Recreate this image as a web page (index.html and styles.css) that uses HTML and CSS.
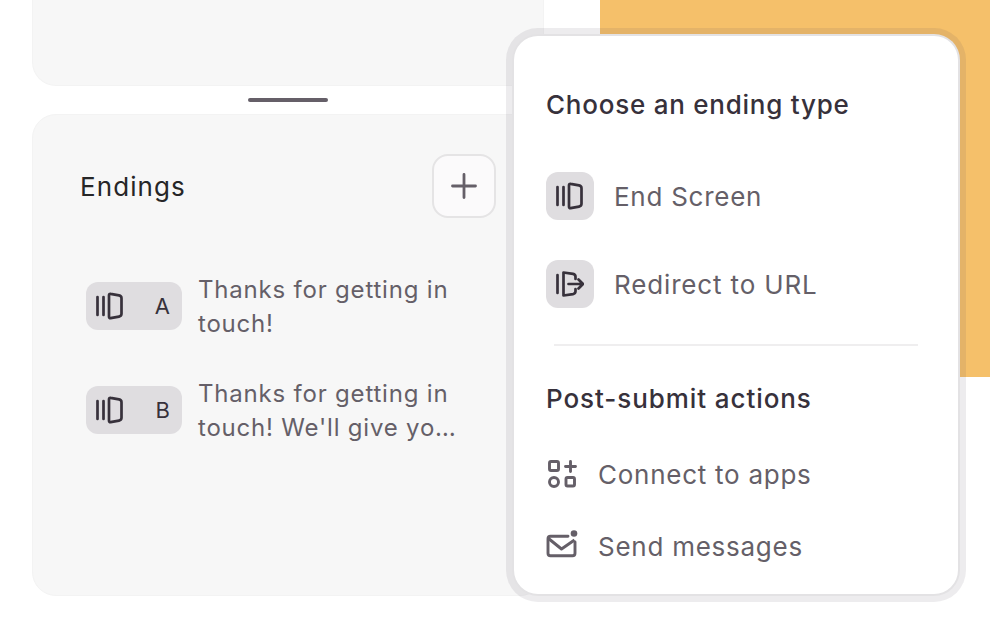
FILE: index.html
```html
<!DOCTYPE html>
<html lang="en">
<head>
<meta charset="utf-8">
<title>Endings</title>
<link rel="stylesheet" href="styles.css">
</head>
<body>
<svg class="defs" width="0" height="0" aria-hidden="true">
  <symbol id="end" viewBox="0 0 28 28">
    <path d="M1.500 5v18M7.500 5v18M13 3.200c0-.9.7-1.500 1.600-1.300l8.400 1.500c1.500.3 2.500 1.300 2.500 2.800v15.600c0 1.500-1 2.500-2.500 2.800l-8.400 1.500c-.9.2-1.600-.4-1.600-1.300z" fill="none" stroke="currentColor" stroke-width="2.700" stroke-linecap="round" stroke-linejoin="round"/>
  </symbol>
</svg>
<main class="page">
  <section class="left">
    <div class="card card-top"></div>
    <div class="handle-row"><span class="handle"></span></div>
    <div class="card card-endings">
      <header class="endings-head">
        <h2 class="endings-title">Endings</h2>
        <button class="add-btn" aria-label="Add ending">
          <svg width="28" height="28" viewBox="0 0 28 28"><path d="M14 2.500v23M2.500 14h23" fill="none" stroke="currentColor" stroke-width="2.800" stroke-linecap="round"/></svg>
        </button>
      </header>
      <ul class="ending-list">
        <li class="ending">
          <span class="badge"><svg class="i-end" width="28" height="28"><use href="#end"/></svg><span class="letter">A</span></span>
          <span class="ending-text">Thanks for getting in touch!</span>
        </li>
        <li class="ending">
          <span class="badge"><svg class="i-end" width="28" height="28"><use href="#end"/></svg><span class="letter">B</span></span>
          <span class="ending-text">Thanks for getting in touch! We'll give yo…</span>
        </li>
      </ul>
    </div>
  </section>
  <aside class="accent"></aside>
  <div class="popup">
    <h3 class="popup-title">Choose an ending type</h3>
    <div class="type-row">
      <span class="type-icon"><svg width="28" height="28"><use href="#end"/></svg></span>
      <span class="type-label">End Screen</span>
    </div>
    <div class="type-row">
      <span class="type-icon">
        <svg width="28" height="28" viewBox="0 0 28 28"><path d="M1.500 5v18M7.500 2.500v23M7.500 2.500l9.500 1.400c1.500.3 2.500 1.300 2.500 2.800v2.300M7.500 25.500l9.500-1.400c1.500-.3 2.500-1.300 2.500-2.800v-2.300M12.500 14h14.500M22.500 9.500 27 14l-4.500 4.500" fill="none" stroke="currentColor" stroke-width="2.700" stroke-linecap="round" stroke-linejoin="round"/></svg>
      </span>
      <span class="type-label type-label-wide">Redirect to URL</span>
    </div>
    <hr class="divider">
    <h3 class="popup-title popup-title-2">Post-submit actions</h3>
    <div class="action-row">
      <svg class="action-icon" width="32" height="32" viewBox="0 0 32 32"><g fill="none" stroke="currentColor" stroke-width="2.900" stroke-linecap="round" stroke-linejoin="round"><rect x="3.500" y="3.500" width="9" height="9" rx="1.500"/><path d="M24.500 3.500v10M19.500 8.500h10"/><circle cx="8" cy="24" r="4.500"/><rect x="20" y="19.500" width="8.500" height="8.500" rx="1.500"/></g></svg>
      <span class="type-label">Connect to apps</span>
    </div>
    <div class="action-row action-row-2">
      <svg class="action-icon" width="32" height="32" viewBox="0 0 32 32"><path d="M22 6.300H4.500A2.500 2.500 0 0 0 2 8.800v14.400a2.500 2.500 0 0 0 2.500 2.500h22a2.500 2.500 0 0 0 2.500-2.500V12" fill="none" stroke="currentColor" stroke-width="2.900" stroke-linecap="round"/><path d="M2.500 8.500 15.500 19 28.500 10" fill="none" stroke="currentColor" stroke-width="2.900" stroke-linejoin="round"/><circle cx="28" cy="3.500" r="3.300" fill="currentColor"/></svg>
      <span class="type-label">Send messages</span>
    </div>
  </div>
</main>
</body>
</html>
```

FILE: styles.css
```css
* { box-sizing: border-box; }
html, body { margin: 0; padding: 0; height: 100%; background: #fff; overflow: hidden; }
body { font-family: Inter, "Liberation Sans", sans-serif; }
.defs { position: absolute; }
.page { position: relative; display: flex; width: 990px; height: 628px; }

.left { width: 512px; margin-left: 32px; display: flex; flex-direction: column; }
.card { background: #f7f7f7; border: 1px solid #f3f3f3; }
.card-top { height: 86px; border-top: 0; border-radius: 0 0 24px 24px; }
.handle-row { height: 28px; display: flex; align-items: center; justify-content: center; }
.handle { width: 80px; height: 4px; border-radius: 2px; background: #655f68; }
.card-endings { height: 482px; border-radius: 24px; padding: 39px 47px 0 47px; }

.endings-head { display: flex; align-items: center; justify-content: space-between; width: 416px; height: 64px; }
.endings-title { margin: 0; font-size: 26px; font-weight: 400; letter-spacing: 1.1px; color: #262627; }
.add-btn { width: 64px; height: 64px; padding: 0; display: flex; align-items: center; justify-content: center; border: 2px solid #e5e4e5; border-radius: 16px; background: #fbfafb; color: #655f68; }

.ending-list { list-style: none; margin: 55px 0 0; padding: 0 0 0 6px; width: 390px; }
.ending { display: flex; gap: 16px; margin-bottom: 36px; }
.badge { flex: none; display: flex; align-items: center; justify-content: space-between; width: 96px; height: 48px; margin-top: 9px; padding: 0 12px 0 10px; background: #dfdde0; border-radius: 12px; color: #37313b; }
.letter { font-size: 22px; font-weight: 400; }
.ending-text { font-size: 24px; letter-spacing: .8px; line-height: 34px; color: #655f68; width: 262px; height: 68px; }

.accent { position: absolute; left: 600px; top: 0; width: 390px; height: 377px; background: #f5c06a; }

.popup { position: absolute; left: 514px; top: 36px; width: 444px; height: 558px; padding: 0 32px; background: #fff; border-radius: 24px; box-shadow: 0 0 0 2px #e3e2e4, 0 0 0 8px rgba(80, 70, 90, .1); }
.popup-title { margin: 0; padding-top: 52px; font-size: 26px; line-height: 34px; font-weight: 500; letter-spacing: .76px; color: #37313b; }
.type-row { display: flex; align-items: center; gap: 20px; height: 48px; margin-top: 50px; }
.type-row + .type-row { margin-top: 40px; }
.type-icon { flex: none; width: 48px; height: 48px; display: flex; align-items: center; justify-content: center; border-radius: 12px; background: #dfdde0; color: #37313b; }
.type-label { font-size: 26px; letter-spacing: .74px; color: #655f68; }
.type-label-wide { letter-spacing: .85px; }
.divider { margin: 36px 8px 0; height: 2px; border: 0; background: #efeeef; }
.popup-title-2 { padding-top: 36px; letter-spacing: .92px; }
.action-row { display: flex; align-items: center; gap: 20px; height: 32px; margin-top: 42px; color: #655f68; }
.action-row-2 { margin-top: 40px; }
.action-icon { flex: none; }
```
